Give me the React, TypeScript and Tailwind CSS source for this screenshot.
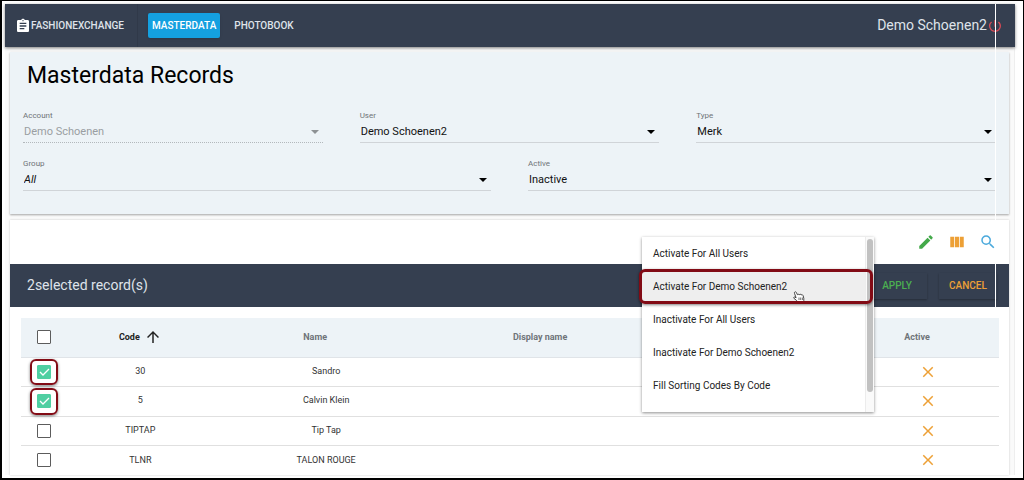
import { useState } from 'react';
import {
  MdArrowUpward,
  MdAssignment,
  MdClose,
  MdEdit,
  MdPowerSettingsNew,
  MdSearch,
  MdViewColumn,
} from 'react-icons/md';
import clsx from 'clsx';

type Filter = { id: string; label: string; value: string; disabled?: boolean; italic?: boolean };

const primaryFilters: Filter[] = [
  { id: 'account', label: 'Account', value: 'Demo Schoenen', disabled: true },
  { id: 'user', label: 'User', value: 'Demo Schoenen2' },
  { id: 'type', label: 'Type', value: 'Merk' },
];

const secondaryFilters: Filter[] = [
  { id: 'group', label: 'Group', value: 'All', italic: true },
  { id: 'active', label: 'Active', value: 'Inactive' },
];

const bulkActions = [
  'Activate For All Users',
  'Activate For Demo Schoenen2',
  'Inactivate For All Users',
  'Inactivate For Demo Schoenen2',
  'Fill Sorting Codes By Code',
];

const records = [
  { code: '30', name: 'Sandro' },
  { code: '5', name: 'Calvin Klein' },
  { code: 'TIPTAP', name: 'Tip Tap' },
  { code: 'TLNR', name: 'TALON ROUGE' },
];

const FilterSelect = ({ id, label, value, disabled, italic }: Filter) => (
  <div className="flex flex-col">
    <label htmlFor={id} className="text-[8px] leading-3 text-[#6f7377]">
      {label}
    </label>
    <div
      className={clsx(
        'grid items-center border-b',
        disabled ? 'border-dotted border-[#b3b8bc] text-[#9a9ea2]' : 'border-[#d0d4d8] text-[#111]',
      )}
    >
      <select
        id={id}
        disabled={disabled}
        defaultValue={value}
        className={clsx(
          'col-start-1 row-start-1 h-5 w-full appearance-none bg-transparent pl-px text-[11px] leading-5 outline-none',
          italic && 'italic',
        )}
      >
        <option>{value}</option>
      </select>
      <svg
        viewBox="0 0 8 4"
        className={clsx(
          'pointer-events-none col-start-1 row-start-1 mr-1 h-1 w-2 justify-self-end',
          disabled ? 'fill-[#8d9194]' : 'fill-black',
        )}
      >
        <path d="M0 0h8L4 4z" />
      </svg>
    </div>
  </div>
);

type CheckBoxProps = { label: string; checked: boolean; onChange: () => void };

const CheckBox = ({ label, checked, onChange }: CheckBoxProps) => (
  <span className="grid place-items-center">
    <input
      type="checkbox"
      aria-label={label}
      checked={checked}
      onChange={onChange}
      className="col-start-1 row-start-1 size-3.5 appearance-none rounded-[1px] border border-[#5c5c5c] bg-white checked:border-[#4fcfa2] checked:bg-[#4fcfa2]"
    />
    {checked && (
      <svg
        viewBox="0 0 14 14"
        className="pointer-events-none col-start-1 row-start-1 size-3.5 fill-none stroke-white"
      >
        <path d="M3 7l3 3 6-6" strokeWidth="1.3" />
      </svg>
    )}
  </span>
);

/** Column title with room for the sort arrow, which only shows on the sorted column. */
const SortHeader = ({ label, sorted }: { label: string; sorted?: boolean }) => (
  <th scope="col" className={clsx('p-0 font-bold', sorted ? 'text-[#222]' : 'text-[#6f7479]')}>
    <button type="button" className="inline-flex items-center gap-1 align-middle">
      {label}
      <MdArrowUpward className={clsx('size-[18px]', !sorted && 'invisible')} />
    </button>
  </th>
);

const HandCursor = () => (
  <svg viewBox="0 0 12 12" className="pointer-events-none absolute bottom-0 left-[151px] size-3">
    <path
      d="M1.8 1c.7-.5 1.4 0 1.7.7l.9 2 .8-.5 1 .5 1-.5 1 .6 1-.2 1 1.2.6 2.6v2.1l-.8 1.7-5 .3-1.4-2L.8 7.2c-.4-.8.3-1.400 1.100-1.100l1.200.7L1.500 2.300c-.2-.5-.1-1 .3-1.300z"
      fill="#fff"
      stroke="#333"
      strokeWidth=".9"
    />
    <path d="M6 6.500v2.500M7.700 6.500v2.500M9.400 6.500v2.500" stroke="#333" strokeWidth=".7" />
  </svg>
);

const BulkActionMenu = () => (
  <div className="absolute -top-[27px] right-[135px] z-10 flex w-[232px] bg-white font-normal shadow-[0_1px_3px_rgba(0,0,0,0.45)]">
    <ul role="listbox" aria-label="Bulk action" className="flex-1 pb-2.5">
      {bulkActions.map((action, i) => (
        <li key={action} role="option" aria-selected={i === 1} className="relative">
          <button
            type="button"
            className={clsx(
              'h-[33px] w-full pl-[11px] text-left text-[10px] text-[#222]',
              i === 1 && 'bg-[#eee]',
            )}
          >
            {action}
          </button>
          {i === 1 && (
            <>
              <HandCursor />
              <span className="pointer-events-none absolute -inset-y-px -right-2 -left-[3px] rounded-md border-3 border-[#820b15] shadow-[0_1px_3px_rgba(0,0,0,0.5)]" />
            </>
          )}
        </li>
      ))}
    </ul>
    <div className="w-[9px] border-l border-[#ececec] bg-[#fafafa] px-px pt-0.5">
      <div className="h-[153px] rounded-full bg-[#c1c1c1]" />
    </div>
  </div>
);

const App = () => {
  const [selected, setSelected] = useState<string[]>(['30', '5']);

  const toggle = (code: string) =>
    setSelected((prev) => (prev.includes(code) ? prev.filter((c) => c !== code) : [...prev, code]));

  const toggleAll = () =>
    setSelected(selected.length === records.length ? [] : records.map((r) => r.code));

  return (
    <div className="flex min-h-screen flex-col border-t border-r border-b-2 border-l-2 border-black bg-white pt-[3px] pr-2 pl-[3px] font-[Roboto,sans-serif] text-[#333]">
      <div className="relative border-r border-[#eee] bg-[#fafafa]">
        <header className="relative -mr-px flex h-[43px] items-center bg-[#353f50] pr-3 pl-2.5 text-[10px] font-medium text-[#dfe3ea] shadow-[0_1px_3px_rgba(0,0,0,0.5)]">
          <a href="#home" className="flex w-[123px] items-center self-stretch border-r border-[#303949]">
            <MdAssignment className="size-4 text-white" />
            FASHIONEXCHANGE
          </a>
          <nav className="flex items-center gap-2.5 pl-2.5">
            <a
              href="#masterdata"
              className="flex h-[25px] items-center rounded-xs bg-[#14a0e0] px-1 text-white shadow-sm"
            >
              MASTERDATA
            </a>
            <a href="#photobook" className="px-1">
              PHOTOBOOK
            </a>
          </nav>
          <span className="ml-auto text-[14px] font-normal">Demo Schoenen2</span>
          <button type="button" aria-label="Log out" className="text-[#d94a55]">
            <MdPowerSettingsNew className="size-4" />
          </button>
        </header>

        <main className="flex flex-col gap-1.5 pt-[5px] pr-[5px] pl-[5px]">
          <section className="bg-[#edf3f7] px-[13px] pb-[23px] shadow-[0_1px_2px_rgba(0,0,0,0.35)]">
            <h1 className="pt-[9px] pl-1 text-[23px] leading-[30px] text-black">Masterdata Records</h1>
            <div className="mt-[19px] grid grid-cols-3 gap-x-[37px]">
              {primaryFilters.map((f) => (
                <FilterSelect key={f.id} {...f} />
              ))}
            </div>
            <div className="mt-[15px] grid grid-cols-2 gap-x-[37px]">
              {secondaryFilters.map((f) => (
                <FilterSelect key={f.id} {...f} />
              ))}
            </div>
          </section>

          <section className="bg-white shadow-[0_0_2px_rgba(0,0,0,0.2)]">
            <div className="flex h-11 items-center justify-end gap-[13px] pr-3">
              <button type="button" aria-label="Edit" className="text-[#43a94a]">
                <MdEdit className="size-[18px]" />
              </button>
              <button type="button" aria-label="Columns" className="text-[#eda036]">
                <MdViewColumn className="size-[18px]" />
              </button>
              <button type="button" aria-label="Search" className="text-[#4aa9dc]">
                <MdSearch className="size-[18px]" />
              </button>
            </div>

            <div className="relative flex h-[43px] items-center justify-end gap-3 bg-[#353f50] pr-3 pl-[17px] text-[10px] font-medium">
              <p className="mr-auto text-[14px] font-normal text-[#dfe3ea]">
                {selected.length}selected record(s)
              </p>
              <button
                type="button"
                className="h-[26px] w-[60px] text-[#4caf50] shadow-[0_1px_2px_rgba(0,0,0,0.3)]"
              >
                APPLY
              </button>
              <button
                type="button"
                className="h-[26px] w-[58px] text-[#eda036] shadow-[0_1px_2px_rgba(0,0,0,0.3)]"
              >
                CANCEL
              </button>
              <BulkActionMenu />
            </div>

            <div className="pt-[11px] pr-2.5 pl-[11px]">
              <table className="w-full table-fixed border-collapse text-center text-[9px]">
                <colgroup>
                  <col className="w-[46px]" />
                  <col className="w-[15%]" />
                  <col className="w-[23%]" />
                  <col className="w-[23%]" />
                  <col />
                  <col className="w-[142px]" />
                </colgroup>
                <thead>
                  <tr className="h-[39px] border-b border-[#e0e4e8] bg-[#edf3f7]">
                    <th scope="col" className="p-0">
                      <CheckBox
                        label="Select all"
                        checked={selected.length === records.length}
                        onChange={toggleAll}
                      />
                    </th>
                    <SortHeader label="Code" sorted />
                    <SortHeader label="Name" />
                    <SortHeader label="Display name" />
                    <td className="p-0" />
                    <SortHeader label="Active" />
                  </tr>
                </thead>
                <tbody>
                  {records.map(({ code, name }, i) => (
                    <tr
                      key={code}
                      className="border-b border-[#e0e0e0] last:border-b-0 odd:h-[29px] even:h-[30px]"
                    >
                      <td className="relative p-0">
                        <CheckBox
                          label={`Select ${name}`}
                          checked={selected.includes(code)}
                          onChange={() => toggle(code)}
                        />
                        {i < 2 && (
                          <span className="pointer-events-none absolute inset-x-[9px] inset-y-px rounded-md border-2 border-[#820b15] shadow-[0_1px_3px_rgba(0,0,0,0.5)]" />
                        )}
                      </td>
                      <td className="p-0">{code}</td>
                      <td className="p-0">{name}</td>
                      <td className="p-0" />
                      <td className="p-0" />
                      <td className="p-0">
                        <MdClose aria-label="Inactive" className="mx-auto size-[18px] text-[#eda036]" />
                      </td>
                    </tr>
                  ))}
                </tbody>
              </table>
            </div>
          </section>
        </main>
        <div className="pointer-events-none absolute top-0 right-[18px] h-[303px] w-px bg-white" />
      </div>
    </div>
  );
};

export default App;
